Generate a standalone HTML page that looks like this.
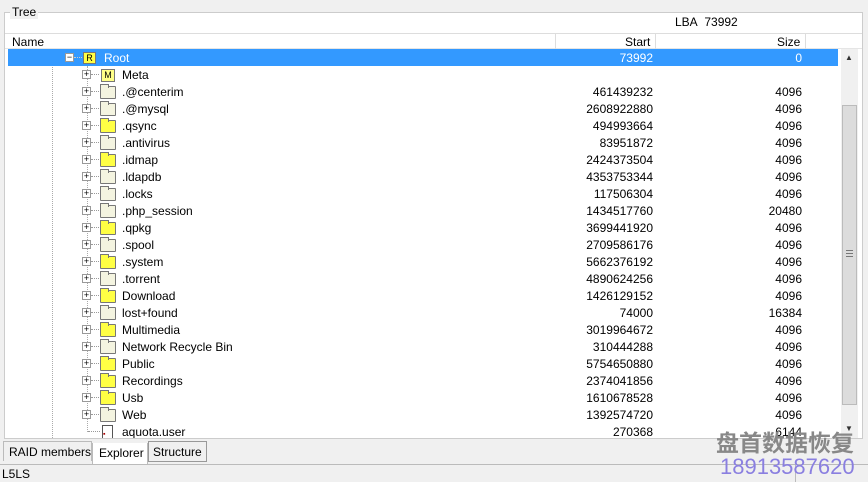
<!DOCTYPE html>
<html><head><style>
*{margin:0;padding:0;box-sizing:border-box}
body{width:868px;height:482px;background:#f0f0f0;font-family:"Liberation Sans",sans-serif;font-size:12px;color:#000;position:relative;overflow:hidden}
.a{position:absolute}
.row{position:absolute;left:8px;width:830px;height:17px;line-height:18px}
.row .t{position:absolute;left:114px}
.row .s{position:absolute;right:185px}
.row .z{position:absolute;right:36px}
.pb{position:absolute;left:74px;top:4px;width:9px;height:9px;border:1px solid #999;background:#fff;font-size:9px;line-height:7px;text-align:center;color:#000}
.hl{position:absolute;left:83px;top:8px;width:8px;border-top:1px dotted #999}
.fd{position:absolute;left:92px;top:3px;width:16px;height:13px;border:1px solid #777;border-radius:1px;background:#ffff44}
.fd.l{background:#f4f4e0}
.fd:before{content:"";position:absolute;left:-1px;top:-3px;width:7px;height:3px;border:1px solid #777;border-bottom:none;background:inherit}
</style></head><body>
<div class="a" style="left:4px;top:12px;width:859px;height:427px;border:1px solid #ccc;background:#fff"></div>
<div class="a" style="left:10px;top:5px;background:#f0f0f0;padding:0 2px;line-height:14px">Tree</div>
<div class="a" style="left:675px;top:15px">LBA&nbsp; 73992</div>
<div class="a" style="left:5px;top:33px;width:857px;height:16px;border-top:1px solid #ddd;border-bottom:1px solid #e5e5e5;background:#fff"></div>
<div class="a" style="left:12px;top:35px">Name</div>
<div class="a" style="left:555px;top:33px;height:16px;border-left:1px solid #ddd"></div>
<div class="a" style="left:655px;top:33px;height:16px;border-left:1px solid #ddd"></div>
<div class="a" style="left:805px;top:33px;height:16px;border-left:1px solid #ddd"></div>
<div class="a" style="left:625px;top:35px">Start</div>
<div class="a" style="left:777px;top:35px">Size</div>
<div class="a" style="left:841px;top:49px;width:17px;height:389px;background:#f0f0f0"></div>
<div class="a" style="left:845px;top:53px;font-size:8px;color:#333">▲</div>
<div class="a" style="left:845px;top:424px;font-size:8px;color:#333">▼</div>
<div class="a" style="left:842px;top:105px;width:15px;height:300px;background:#dcdcdc;border:1px solid #bbb"></div>
<div class="a" style="left:846px;top:250px;width:7px;height:7px;border-top:1px solid #777;border-bottom:1px solid #777"></div>
<div class="a" style="left:846px;top:253px;width:7px;border-top:1px solid #777"></div>
<div class="a" style="left:52px;top:49px;height:389px;border-left:1px dotted #aaa"></div>
<div class="a" style="left:87px;top:66px;height:366px;border-left:1px dotted #aaa"></div>
<div class="row" style="top:49px;background:#3399ff;color:#fff">
<div class="pb" style="left:57px">−</div>
<div class="hl" style="left:66px;border-color:#ccc"></div>
<div class="a" style="left:75px;top:3px;width:13px;height:12px;background:#ffff44;border:1px solid #777;color:#000;font-size:9px;line-height:10px;text-align:center">R</div>
<span class="a" style="left:96px">Root</span><span class="s">73992</span><span class="z">0</span></div>
<div class="row" style="top:66px"><div class="pb">+</div><div class="hl"></div><div class="a" style="left:93px;top:3px;width:14px;height:13px;background:#ffff88;border:1px solid #777;font-size:9px;line-height:11px;text-align:center">M</div><span class="t">Meta</span></div>
<script>
var d=[[".@centerim","461439232","4096",1],[".@mysql","2608922880","4096",1],[".qsync","494993664","4096",0],[".antivirus","83951872","4096",1],[".idmap","2424373504","4096",0],[".ldapdb","4353753344","4096",1],[".locks","117506304","4096",1],[".php_session","1434517760","20480",1],[".qpkg","3699441920","4096",0],[".spool","2709586176","4096",1],[".system","5662376192","4096",0],[".torrent","4890624256","4096",1],["Download","1426129152","4096",0],["lost+found","74000","16384",1],["Multimedia","3019964672","4096",0],["Network Recycle Bin","310444288","4096",1],["Public","5754650880","4096",0],["Recordings","2374041856","4096",0],["Usb","1610678528","4096",0],["Web","1392574720","4096",1]];
var h="";d.forEach(function(r,i){h+='<div class="row" style="top:'+(83+i*17)+'px"><div class="pb">+</div><div class="hl"></div><div class="fd'+(r[3]?' l':'')+'"></div><span class="t">'+r[0]+'</span><span class="s">'+r[1]+'</span><span class="z">'+r[2]+'</span></div>';});
document.write(h);
</script>
<div class="row" style="top:423px;height:15px;overflow:hidden"><div class="hl" style="left:80px;width:12px"></div><div class="a" style="left:94px;top:2px;width:11px;height:14px;border:1px solid #555;background:#fff;font-size:7px;color:#a00">▪</div><span class="t">aquota.user</span><span class="s">270368</span><span class="z">6144</span></div>
<div class="a" style="left:3px;top:441px;width:89px;height:20px;border:1px solid #bbb;border-bottom:none;background:#f0f0f0;line-height:20px;padding-left:5px">RAID members</div>
<div class="a" style="left:92px;top:443px;width:56px;height:22px;border:1px solid #bbb;border-top:none;background:#fff;line-height:21px;padding-left:6px">Explorer</div>
<div class="a" style="left:148px;top:441px;width:59px;height:21px;border:1px solid #999;background:#f0f0f0;line-height:20px;padding-left:4px">Structure</div>
<div class="a" style="left:0;top:464px;width:868px;border-top:1px solid #bbb"></div>
<div class="a" style="left:2px;top:467px">L5LS</div>
<div class="a" style="left:795px;top:464px;height:18px;border-left:1px solid #bbb"></div>
<div class="a" style="left:716px;top:427px;font-family:'Noto Sans CJK SC',sans-serif;font-size:23px;color:#888;font-weight:bold;line-height:28px">盘首数据恢复</div>
<div class="a" style="left:720px;top:455px;font-size:22px;color:#8a7fe0;line-height:24px">18913587620</div>
</body></html>
